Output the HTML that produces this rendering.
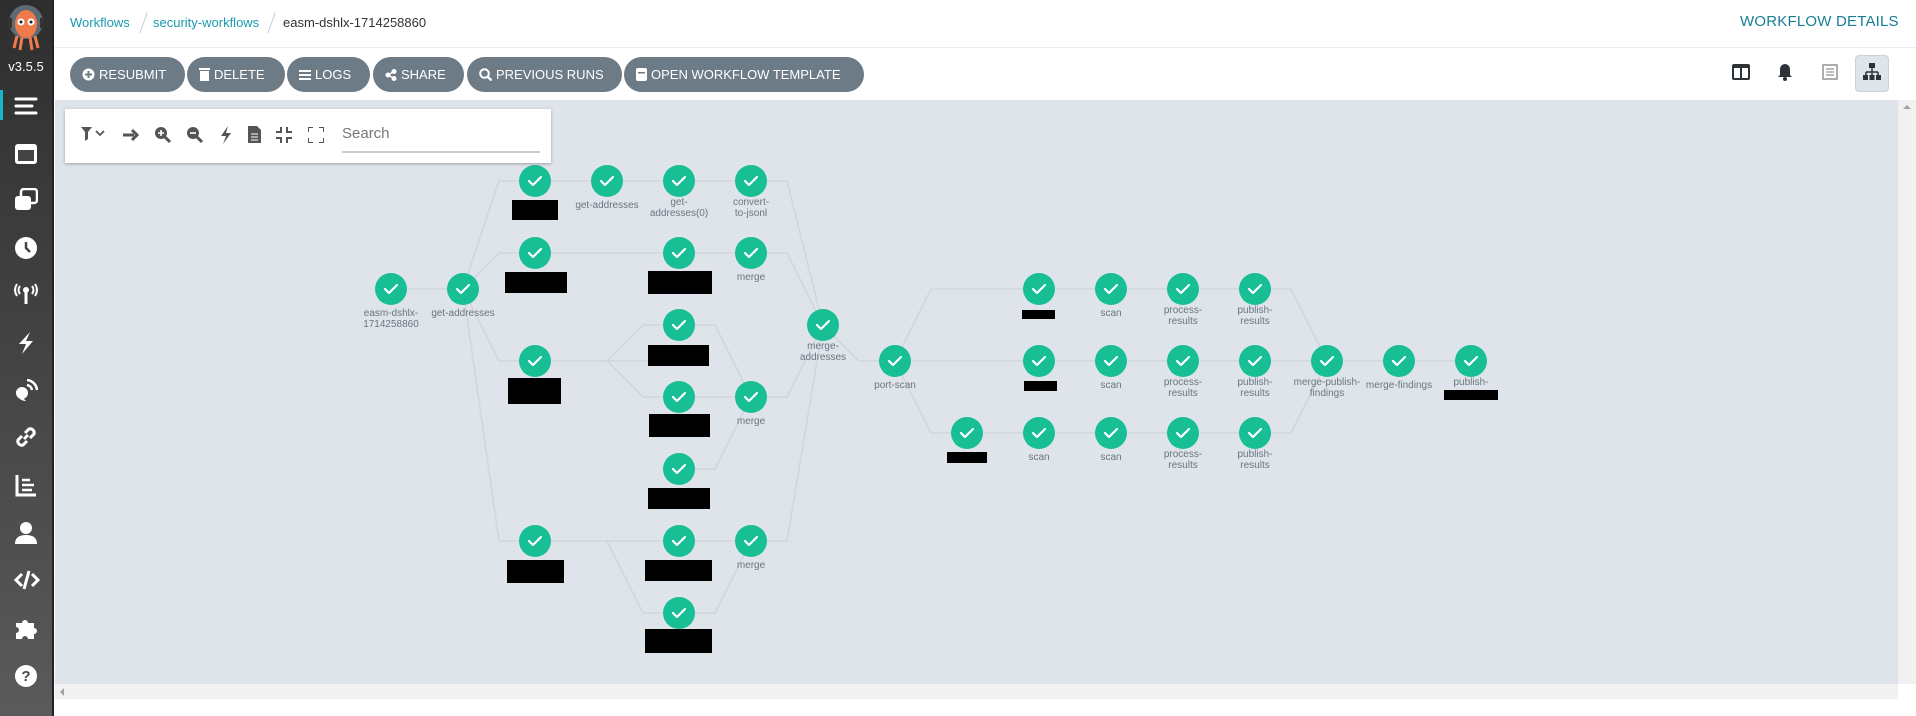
<!DOCTYPE html>
<html><head><meta charset="utf-8">
<style>
*{margin:0;padding:0;box-sizing:border-box}
body{width:1916px;height:716px;overflow:hidden;background:#fff;font-family:"Liberation Sans",sans-serif;position:relative}
.side{position:absolute;left:0;top:0;width:54px;height:716px;background:linear-gradient(#2e2e2e,#5a5a5a);border-right:2px solid #222}
.side svg{position:absolute;left:14px}
.ver{position:absolute;left:0;width:52px;top:59px;text-align:center;color:#fff;font-size:13px}
.crumb{position:absolute;top:15px;font-size:13px}
.sep{position:absolute;top:12px;width:1px;height:22px;background:#ccd;transform:rotate(20deg)}
.hdiv{position:absolute;left:54px;right:0;top:47px;height:1px;background:#e8edf1}
.btn{position:absolute;top:57px;height:35px;border-radius:18px;background:#6d7b87;color:#fff;font-size:13px;line-height:35px;padding-left:12px;white-space:nowrap}
.btn svg{vertical-align:-2px;margin-right:4px}
.canvas{position:absolute;left:55px;top:100px;width:1843px;height:584px;background:#dee4ea}
.tb{position:absolute;left:65px;top:109px;width:486px;height:54px;background:#fff;box-shadow:0 1px 3px rgba(0,0,0,.3)}
.lbl{font-size:10px;fill:#6b7580;text-anchor:middle}
</style></head><body>
<div class="side">
 <svg style="left:6px;top:4px" width="40" height="48" viewBox="0 0 40 48"><circle cx="20" cy="18" r="17" fill="#5d6b74"/><ellipse cx="20" cy="20" rx="11" ry="14" fill="#ef7b4d"/><circle cx="15" cy="18" r="3.5" fill="#fff"/><circle cx="25" cy="18" r="3.5" fill="#fff"/><circle cx="15" cy="18" r="1.5" fill="#222"/><circle cx="25" cy="18" r="1.5" fill="#222"/><path d="M11 32l-3 12M16 33l-2 13M24 33l2 13M29 32l3 12" stroke="#ef7b4d" stroke-width="3"/><rect x="2" y="14" width="4" height="10" fill="#333"/><rect x="34" y="14" width="4" height="10" fill="#333"/></svg>
 <div class="ver">v3.5.5</div>
 <div style="position:absolute;left:0;top:90px;width:3px;height:30px;background:#19b6c9"></div>
 <svg style="top:94px" width="24" height="24"><path d="M2 5h20M2 12h16M2 19h20" stroke="#fff" stroke-width="3" stroke-linecap="round"/></svg>
 <svg style="top:142px" width="24" height="24"><rect x="1" y="2" width="22" height="20" rx="3" fill="#fff"/><rect x="4" y="8" width="16" height="11" fill="#444"/></svg>
 <svg style="top:188px" width="24" height="24"><rect x="7" y="1" width="16" height="14" rx="3" fill="none" stroke="#fff" stroke-width="2.5"/><rect x="1" y="8" width="16" height="14" rx="3" fill="#fff"/></svg>
 <svg style="top:236px" width="24" height="24"><circle cx="12" cy="12" r="11" fill="#fff"/><path d="M12 6v6l4 4" stroke="#444" stroke-width="2.5" fill="none"/></svg>
 <svg style="top:282px" width="24" height="24"><path d="M12 9v13" stroke="#fff" stroke-width="3"/><circle cx="12" cy="8" r="3" fill="#fff"/><path d="M6 4q-3 4 0 8M18 4q3 4 0 8M3 2q-4 6 0 12M21 2q4 6 0 12" stroke="#fff" stroke-width="2" fill="none"/></svg>
 <svg style="top:331px" width="24" height="24"><path d="M16 1L5 13h7l-4 10 11-13h-7z" fill="#fff"/></svg>
 <svg style="top:379px" width="24" height="24"><path d="M2 12a10 10 0 0 0 10 10L2 12z" fill="#fff"/><circle cx="8" cy="14" r="6" fill="#fff"/><path d="M13 6a6 6 0 0 1 5 5M13 1a11 11 0 0 1 10 10" stroke="#fff" stroke-width="2.5" fill="none"/></svg>
 <svg style="top:425px" width="24" height="24"><path d="M10 14l4-4M8 11l-4 4a4 4 0 0 0 5 5l4-4M16 13l4-4a4 4 0 0 0-5-5l-4 4" stroke="#fff" stroke-width="3" fill="none"/></svg>
 <svg style="top:473px" width="24" height="24"><path d="M3 2v20h19" stroke="#fff" stroke-width="3" fill="none"/><path d="M8 7h8M8 12h12M8 17h10" stroke="#fff" stroke-width="2.5"/></svg>
 <svg style="top:521px" width="24" height="24"><circle cx="12" cy="7" r="6" fill="#fff"/><path d="M1 23q0-9 11-9t11 9z" fill="#fff"/></svg>
 <svg style="top:568px" width="26" height="24"><path d="M8 6l-6 6 6 6M18 6l6 6-6 6M15 3l-5 18" stroke="#fff" stroke-width="3" fill="none"/></svg>
 <svg style="top:616px" width="24" height="24"><path d="M2 7h6a3 3 0 1 1 6 0h6v5a3 3 0 1 1 0 6v5H14a3 3 0 1 0-6 0H2v-6a3 3 0 1 0 0-6z" fill="#fff"/></svg>
 <svg style="top:664px" width="24" height="24"><circle cx="12" cy="12" r="11" fill="#fff"/><text x="12" y="17" text-anchor="middle" font-size="15" font-weight="bold" fill="#444" font-family="Liberation Sans">?</text></svg>
</div>

<div class="crumb" style="left:70px;color:#1a9bb0">Workflows</div>
<div class="sep" style="left:143px"></div>
<div class="crumb" style="left:153px;color:#1a9bb0">security-workflows</div>
<div class="sep" style="left:271px"></div>
<div class="crumb" style="left:283px;color:#333">easm-dshlx-1714258860</div>
<div class="crumb" style="left:1740px;color:#177e95;font-size:15px;top:13px;letter-spacing:.2px">WORKFLOW DETAILS</div>
<div class="hdiv"></div>

<div class="btn" style="left:70px;width:115px"><svg width="13" height="13"><circle cx="6.5" cy="6.5" r="6" fill="#fff"/><path d="M6.5 3v7M3 6.5h7" stroke="#6d7b87" stroke-width="2"/></svg>RESUBMIT</div>
<div class="btn" style="left:187px;width:98px"><svg width="11" height="13"><rect x="1" y="3" width="9" height="10" fill="#fff"/><rect x="0" y="0" width="11" height="2" fill="#fff"/></svg>DELETE</div>
<div class="btn" style="left:287px;width:83px"><svg width="12" height="12"><path d="M0 2h12M0 6h12M0 10h12" stroke="#fff" stroke-width="2"/></svg>LOGS</div>
<div class="btn" style="left:373px;width:91px"><svg width="12" height="12"><circle cx="9" cy="2.5" r="2.5" fill="#fff"/><circle cx="3" cy="6" r="2.5" fill="#fff"/><circle cx="9" cy="9.5" r="2.5" fill="#fff"/><path d="M9 2.5L3 6l6 3.5" stroke="#fff" stroke-width="1.5" fill="none"/></svg>SHARE</div>
<div class="btn" style="left:467px;width:155px"><svg width="13" height="13"><circle cx="5.5" cy="5.5" r="4.3" fill="none" stroke="#fff" stroke-width="2"/><path d="M8.5 8.5l4 4" stroke="#fff" stroke-width="2.3"/></svg>PREVIOUS RUNS</div>
<div class="btn" style="left:624px;width:240px"><svg width="11" height="13"><rect x="0" y="0" width="11" height="13" rx="2" fill="#fff"/><rect x="2" y="4" width="7" height="1.5" fill="#6d7b87"/></svg>OPEN WORKFLOW TEMPLATE</div>

<svg style="position:absolute;left:1731px;top:63px" width="20" height="18"><rect x="1" y="1" width="18" height="16" rx="2" fill="#2d3338"/><rect x="3" y="5" width="6" height="10" fill="#fff"/><rect x="11" y="5" width="6" height="10" fill="#fff"/></svg>
<svg style="position:absolute;left:1777px;top:63px" width="16" height="18"><path d="M8 1a5 5 0 0 0-5 5v6l-2 2h14l-2-2V6a5 5 0 0 0-5-5z" fill="#2d3338"/><circle cx="8" cy="16" r="2" fill="#2d3338"/></svg>
<svg style="position:absolute;left:1822px;top:64px" width="16" height="16"><rect x="1" y="1" width="14" height="14" fill="none" stroke="#777" stroke-width="1.2"/><path d="M4 5h8M4 8h8M4 11h8" stroke="#777" stroke-width="1"/></svg>
<div style="position:absolute;left:1855px;top:55px;width:34px;height:37px;border-radius:4px;background:#dfe5ea;border:1px solid #ccd4da"></div>
<svg style="position:absolute;left:1863px;top:63px" width="18" height="18"><rect x="6" y="0" width="6" height="5" fill="#2d3338"/><path d="M9 5v4M3 9h12M3 9v4M9 9v4M15 9v4" stroke="#2d3338" stroke-width="1.5" fill="none"/><rect x="0" y="12" width="5" height="5" fill="#2d3338"/><rect x="6.5" y="12" width="5" height="5" fill="#2d3338"/><rect x="13" y="12" width="5" height="5" fill="#2d3338"/></svg>

<div class="canvas"></div>
<svg style="position:absolute;left:0;top:0" width="1916" height="716">
<g fill="none" stroke="#cfd6dd" stroke-width="1.5">
<path d="M391 289H463"/>
<path d="M463 289L499 181H535M463 289L499 253H535M463 289L499 361H535M463 289L499 541H535"/>
<path d="M535 181H751M535 253H679"/>
<path d="M535 361H607L643 325H679M607 361H679M607 361L643 397H679"/>
<path d="M535 541H679M607 541L643 613H679"/>
<path d="M679 253H751M679 325H715L751 397M679 397H751M679 469H715L751 397M679 541H751M679 613H715L751 541"/>
<path d="M751 181H787L823 325M751 253H787L823 325M751 397H787L823 325M751 541H787L823 325"/>
<path d="M823 325L859 361H895"/>
<path d="M895 361L931 289H1255M895 361H1471M895 361L931 433H1255"/>
<path d="M1255 289H1291L1327 361M1255 433H1291L1327 361"/>
</g>
<g fill="#18be94">
<circle cx="391" cy="289" r="16"/><circle cx="463" cy="289" r="16"/>
<circle cx="535" cy="181" r="16"/><circle cx="535" cy="253" r="16"/><circle cx="535" cy="361" r="16"/><circle cx="535" cy="541" r="16"/>
<circle cx="607" cy="181" r="16"/>
<circle cx="679" cy="181" r="16"/><circle cx="679" cy="253" r="16"/><circle cx="679" cy="325" r="16"/><circle cx="679" cy="397" r="16"/><circle cx="679" cy="469" r="16"/><circle cx="679" cy="541" r="16"/><circle cx="679" cy="613" r="16"/>
<circle cx="751" cy="181" r="16"/><circle cx="751" cy="253" r="16"/><circle cx="751" cy="397" r="16"/><circle cx="751" cy="541" r="16"/>
<circle cx="823" cy="325" r="16"/><circle cx="895" cy="361" r="16"/><circle cx="967" cy="433" r="16"/>
<circle cx="1039" cy="289" r="16"/><circle cx="1039" cy="361" r="16"/><circle cx="1039" cy="433" r="16"/>
<circle cx="1111" cy="289" r="16"/><circle cx="1111" cy="361" r="16"/><circle cx="1111" cy="433" r="16"/>
<circle cx="1183" cy="289" r="16"/><circle cx="1183" cy="361" r="16"/><circle cx="1183" cy="433" r="16"/>
<circle cx="1255" cy="289" r="16"/><circle cx="1255" cy="361" r="16"/><circle cx="1255" cy="433" r="16"/>
<circle cx="1327" cy="361" r="16"/><circle cx="1399" cy="361" r="16"/><circle cx="1471" cy="361" r="16"/>
</g>
<defs><path id="ck" d="M-6 0l4 4 8-8" fill="none" stroke="#fff" stroke-width="2.2" stroke-linecap="round" stroke-linejoin="round"/></defs>
<use href="#ck" x="391" y="289"/><use href="#ck" x="463" y="289"/>
<use href="#ck" x="535" y="181"/><use href="#ck" x="535" y="253"/><use href="#ck" x="535" y="361"/><use href="#ck" x="535" y="541"/>
<use href="#ck" x="607" y="181"/>
<use href="#ck" x="679" y="181"/><use href="#ck" x="679" y="253"/><use href="#ck" x="679" y="325"/><use href="#ck" x="679" y="397"/><use href="#ck" x="679" y="469"/><use href="#ck" x="679" y="541"/><use href="#ck" x="679" y="613"/>
<use href="#ck" x="751" y="181"/><use href="#ck" x="751" y="253"/><use href="#ck" x="751" y="397"/><use href="#ck" x="751" y="541"/>
<use href="#ck" x="823" y="325"/><use href="#ck" x="895" y="361"/><use href="#ck" x="967" y="433"/>
<use href="#ck" x="1039" y="289"/><use href="#ck" x="1039" y="361"/><use href="#ck" x="1039" y="433"/>
<use href="#ck" x="1111" y="289"/><use href="#ck" x="1111" y="361"/><use href="#ck" x="1111" y="433"/>
<use href="#ck" x="1183" y="289"/><use href="#ck" x="1183" y="361"/><use href="#ck" x="1183" y="433"/>
<use href="#ck" x="1255" y="289"/><use href="#ck" x="1255" y="361"/><use href="#ck" x="1255" y="433"/>
<use href="#ck" x="1327" y="361"/><use href="#ck" x="1399" y="361"/><use href="#ck" x="1471" y="361"/>
<g font-family="Liberation Sans, sans-serif">
<text class="lbl" x="391" y="316">easm-dshlx-</text><text class="lbl" x="391" y="327">1714258860</text>
<text class="lbl" x="463" y="316">get-addresses</text>
<text class="lbl" x="607" y="208">get-addresses</text>
<text class="lbl" x="679" y="205">get-</text><text class="lbl" x="679" y="216">addresses(0)</text>
<text class="lbl" x="751" y="205">convert-</text><text class="lbl" x="751" y="216">to-jsonl</text>
<text class="lbl" x="751" y="280">merge</text><text class="lbl" x="751" y="424">merge</text><text class="lbl" x="751" y="568">merge</text>
<text class="lbl" x="823" y="349">merge-</text><text class="lbl" x="823" y="360">addresses</text>
<text class="lbl" x="895" y="388">port-scan</text>
<text class="lbl" x="1039" y="460">scan</text>
<text class="lbl" x="1111" y="316">scan</text><text class="lbl" x="1111" y="388">scan</text><text class="lbl" x="1111" y="460">scan</text>
<text class="lbl" x="1183" y="313">process-</text><text class="lbl" x="1183" y="324">results</text>
<text class="lbl" x="1183" y="385">process-</text><text class="lbl" x="1183" y="396">results</text>
<text class="lbl" x="1183" y="457">process-</text><text class="lbl" x="1183" y="468">results</text>
<text class="lbl" x="1255" y="313">publish-</text><text class="lbl" x="1255" y="324">results</text>
<text class="lbl" x="1255" y="385">publish-</text><text class="lbl" x="1255" y="396">results</text>
<text class="lbl" x="1255" y="457">publish-</text><text class="lbl" x="1255" y="468">results</text>
<text class="lbl" x="1327" y="385">merge-publish-</text><text class="lbl" x="1327" y="396">findings</text>
<text class="lbl" x="1399" y="388">merge-findings</text>
<text class="lbl" x="1471" y="385">publish-</text>
</g>
<g fill="#000">
<rect x="512" y="200" width="46" height="20"/><rect x="505" y="272" width="62" height="21"/><rect x="508" y="378" width="53" height="26"/><rect x="507" y="560" width="57" height="23"/>
<rect x="648" y="271" width="64" height="23"/><rect x="648" y="345" width="61" height="21"/><rect x="649" y="414" width="61" height="23"/><rect x="648" y="488" width="62" height="21"/><rect x="645" y="560" width="67" height="21"/><rect x="645" y="629" width="67" height="24"/>
<rect x="947" y="452" width="40" height="11"/><rect x="1022" y="310" width="33" height="9"/><rect x="1024" y="381" width="33" height="10"/><rect x="1444" y="390" width="54" height="10"/>
</g>
</svg>

<div class="tb">
 <svg style="position:absolute;left:16px;top:17px" width="30" height="18"><path d="M0 1h11l-4 5v7l-3 2V6z" fill="#555"/><path d="M15 5l4 4 4-4" stroke="#555" stroke-width="1.8" fill="none"/></svg>
 <svg style="position:absolute;left:58px;top:18px" width="18" height="16"><path d="M0 8h11M9 3l5 5-5 5" stroke="#555" stroke-width="3" fill="none"/></svg>
 <svg style="position:absolute;left:89px;top:17px" width="18" height="18"><circle cx="7" cy="7" r="6" fill="#555"/><path d="M11 11l5 5" stroke="#555" stroke-width="3"/><path d="M7 4v6M4 7h6" stroke="#fff" stroke-width="1.6"/></svg>
 <svg style="position:absolute;left:121px;top:17px" width="18" height="18"><circle cx="7" cy="7" r="6" fill="#555"/><path d="M11 11l5 5" stroke="#555" stroke-width="3"/><path d="M4 7h6" stroke="#fff" stroke-width="1.6"/></svg>
 <svg style="position:absolute;left:154px;top:17px" width="14" height="18"><path d="M9 0L2 10h5l-3 8 8-11H7z" fill="#555"/></svg>
 <svg style="position:absolute;left:183px;top:17px" width="13" height="17"><path d="M0 0h9l4 4v13H0z" fill="#555"/><path d="M3 8h7M3 11h7M3 14h7" stroke="#fff" stroke-width="1"/></svg>
 <svg style="position:absolute;left:211px;top:18px" width="16" height="16"><path d="M5 0v5H0M11 0v5h5M5 16v-5H0M11 16v-5h5" stroke="#555" stroke-width="2" fill="none"/></svg>
 <svg style="position:absolute;left:243px;top:18px" width="16" height="16"><path d="M0 5V0h5M11 0h5v5M0 11v5h5M16 11v5h-5" stroke="#555" stroke-width="2" fill="none"/></svg>
 <div style="position:absolute;left:277px;top:16px;font-size:15px;color:#777">Search</div>
 <div style="position:absolute;left:277px;top:42px;width:198px;height:2px;background:#ccc"></div>
</div>

<div style="position:absolute;left:1898px;top:100px;width:18px;height:584px;background:#f1f1f1"></div>
<svg style="position:absolute;left:1902px;top:103px" width="10" height="8"><path d="M1 6l4-4 4 4z" fill="#a3a3a3"/></svg>
<div style="position:absolute;left:55px;top:684px;width:1843px;height:15px;background:#f1f1f1"></div>
<svg style="position:absolute;left:58px;top:687px" width="8" height="10"><path d="M6 1L2 5l4 4z" fill="#a3a3a3"/></svg>
</body></html>
